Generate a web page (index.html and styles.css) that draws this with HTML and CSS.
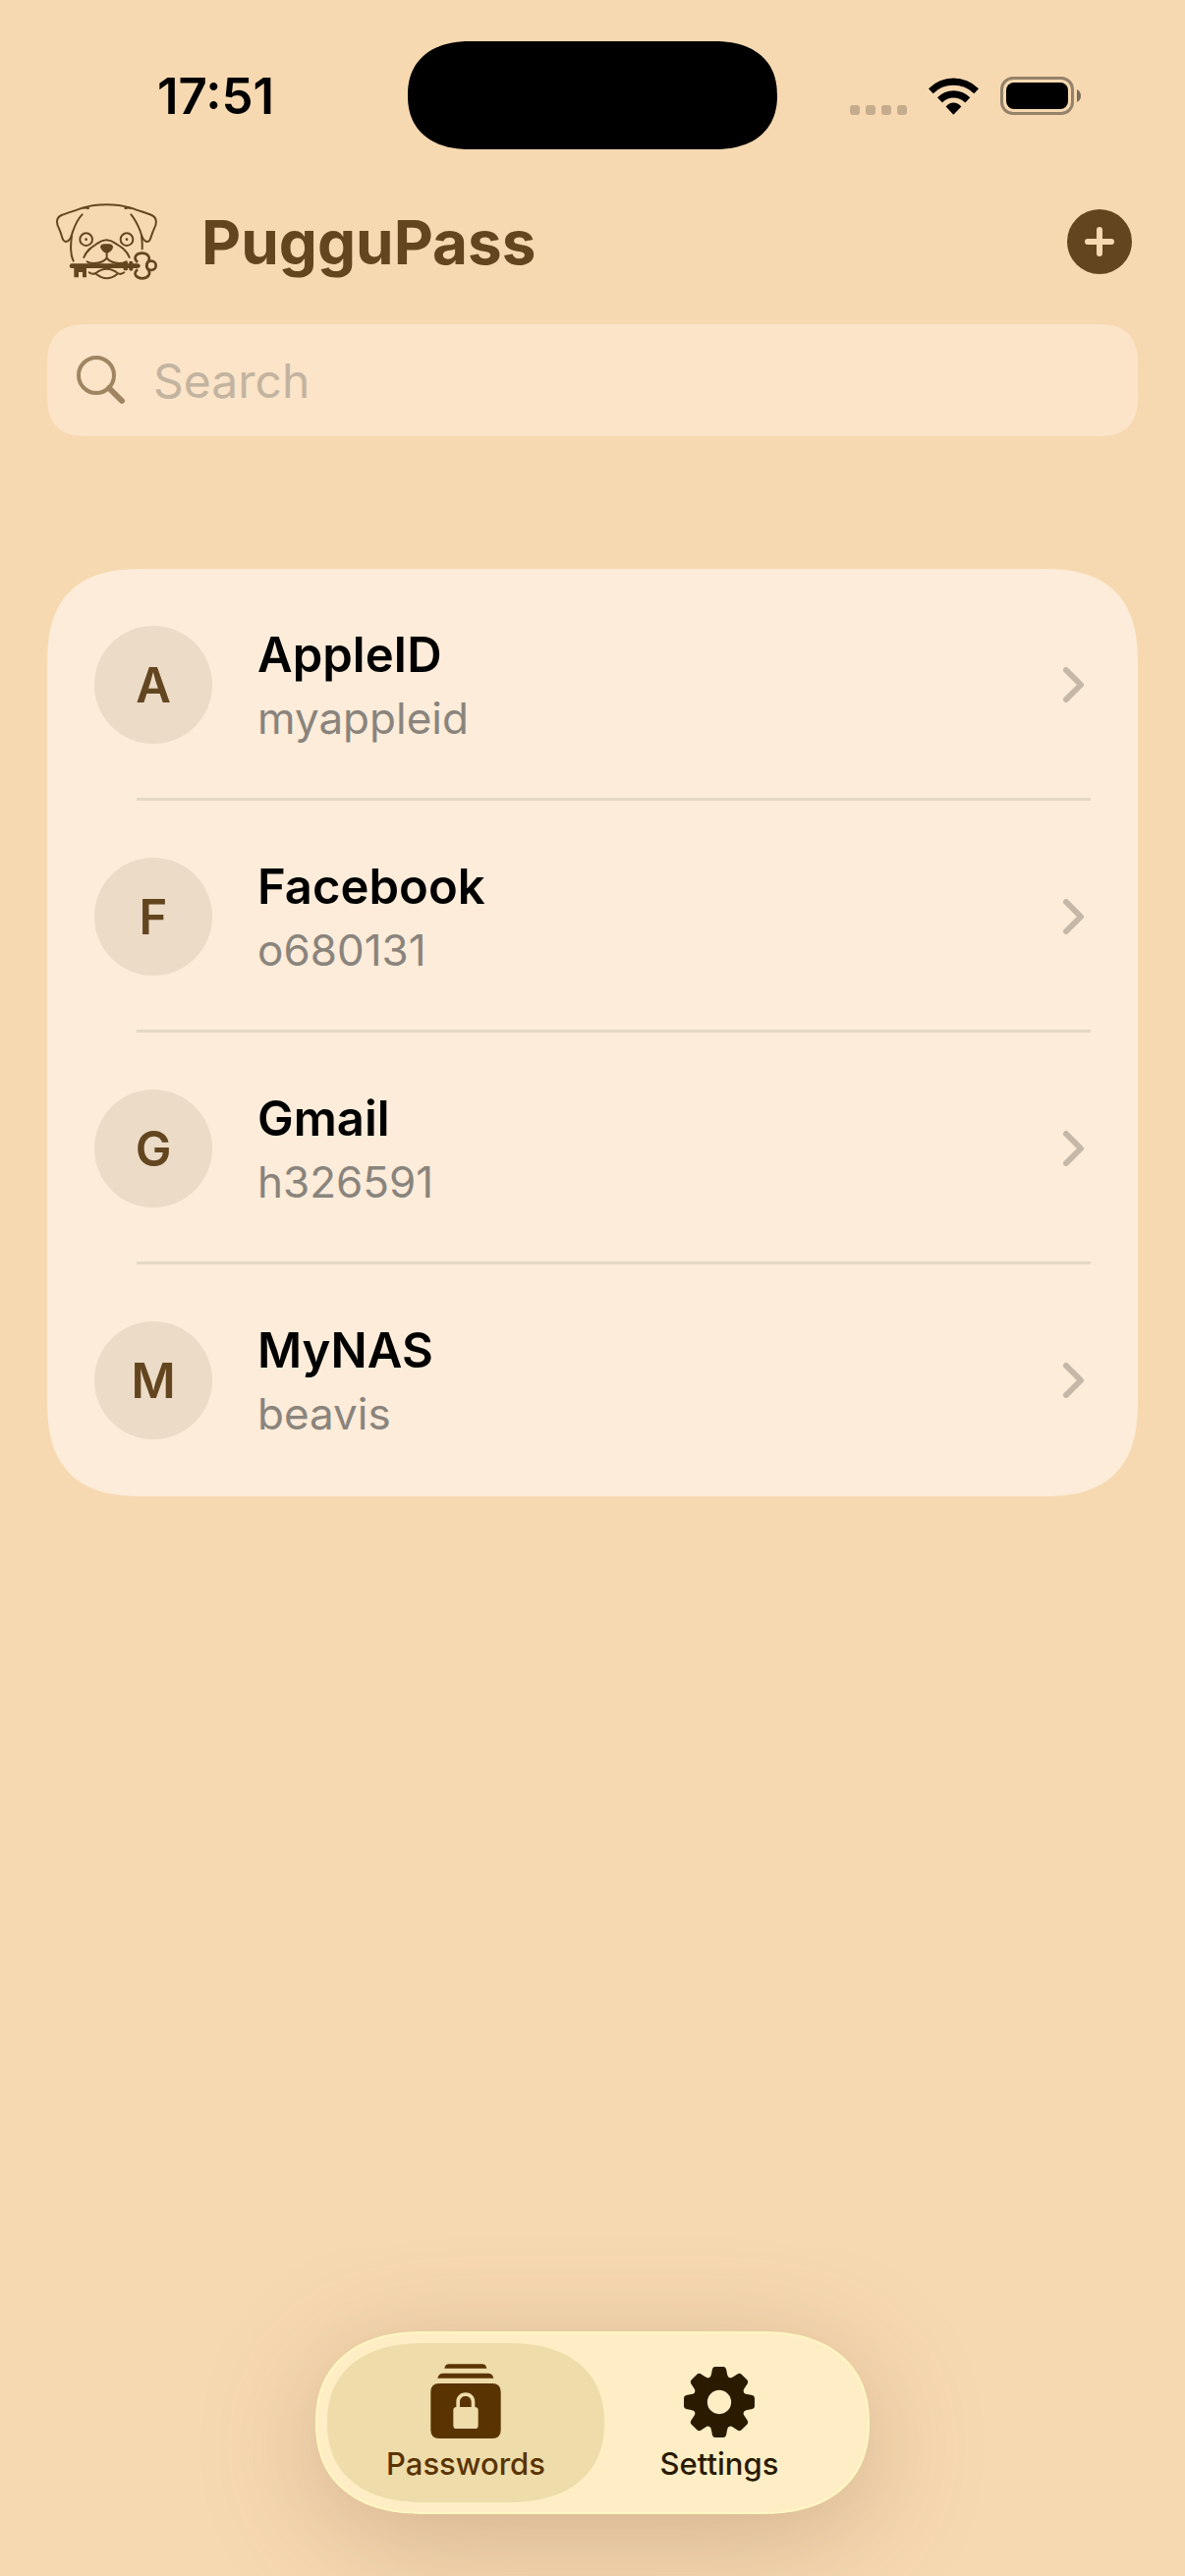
FILE: index.html
```html
<!DOCTYPE html>
<html lang="en">
<head>
<meta charset="utf-8">
<meta name="viewport" content="width=device-width, initial-scale=1">
<title>PugguPass</title>
<link rel="stylesheet" href="styles.css">
</head>
<body>
<div class="status-bar">
  <time class="clock">17:51</time>
  <div class="island"></div>
  <div class="indicators">
    <svg class="signal" viewBox="0 0 58 10" aria-hidden="true">
      <rect width="10" height="10" rx="3"/><rect x="16" width="10" height="10" rx="3"/><rect x="32" width="10" height="10" rx="3"/><rect x="48" width="10" height="10" rx="3"/>
    </svg>
    <svg class="wifi" viewBox="375 86 153 113" aria-hidden="true">
      <path d="M375 119Q407 87 451 87Q495 87 528 119L514 134Q487 109 451 109Q415 109 389 134Z"/>
      <path d="M402 146Q423 125 451 125Q480 125 502 146L487 162Q471 147 451 147Q431 147 417 162Z"/>
      <path d="M428 174Q438 162 451 162Q465 162 475 174L451 199Z"/>
    </svg>
    <svg class="battery" viewBox="0 0 82 39" aria-hidden="true">
      <rect x="1.5" y="1.5" width="72" height="36" rx="11.500" fill="none" stroke="#000" stroke-opacity=".4" stroke-width="3"/>
      <rect x="6" y="6" width="63" height="27" rx="8"/>
      <path d="M78 13Q82 15 82 19.500Q82 24 78 26Z" fill-opacity=".5"/>
    </svg>
  </div>
</div>

<header class="header">
  <svg class="logo" viewBox="48 26 315 288" aria-hidden="true">
    <g fill="none" stroke="#634620" stroke-width="6" stroke-linecap="round" stroke-linejoin="round">
      <path d="M132 67Q165 57 205 57Q245 57 279 67"/>
      <path d="M150 68Q138 64 125 69C104 77 85 82 68 89C49 97 52 117 61 132C67 144 68 156 73 165Q78 173 87 168C99 162 98 148 103 137C110 117 117 101 131 87"/>
      <path d="M262 68Q274 64 287 69C308 77 326 82 343 89C361 97 359 117 350 132C344 144 341 158 337 166Q332 173 324 168C313 162 312 148 308 137C300 117 293 102 280 87"/>
      <path d="M99 153C95 180 94 208 104 229M312 152Q315 172 314 192"/>
      <circle cx="143" cy="163" r="19"/><circle cx="267" cy="163" r="19"/>
      <path d="M136 218C146 193 163 185 178 175Q205 155 232 175C248 185 265 193 275 218"/>
      <path d="M206 202V219C196 234 166 242 146 231M206 219C216 234 246 242 266 231"/>
      <path d="M152 264Q162 272 173 266Q188 253 206 253Q223 253 239 266Q249 272 259 264M173 268Q206 295 239 268"/>
    </g>
    <g fill="#634620">
      <circle cx="143" cy="163" r="4"/><circle cx="267" cy="163" r="4"/>
      <path d="M186 185Q188 177 198 177H213Q223 177 225 185Q226 192 217 200Q206 211 195 200Q186 192 186 185Z"/>
      <path d="M98 237H257V232Q264 226 270 232V237H274V231Q280 227 286 232V237H299Q307 237 309 244Q307 251 299 251H286V256Q280 261 274 256V251H270V256Q264 260 257 256V251H144V279H132V263H120V279H106V251H98Q92 250 92 244Q93 238 98 237Z"/>
    </g>
    <path d="M300 233C284 217 298 205 314 205C331 205 343 219 330 234Q325 243 330 252C344 267 332 282 314 282C297 282 284 269 300 255" fill="none" stroke="#634620" stroke-width="8"/>
    <circle cx="342" cy="243" r="14" fill="none" stroke="#634620" stroke-width="8"/>
  </svg>
  <h1 class="title">PugguPass</h1>
  <button class="add" type="button" aria-label="Add password">
    <svg viewBox="0 0 66 66" aria-hidden="true"><path d="M33 21V45M21 33H45"/></svg>
  </button>
</header>

<main class="content">
  <label class="search">
    <svg class="search-icon" viewBox="0 0 50 50" aria-hidden="true"><circle cx="20" cy="20" r="18"/><path d="M33 33L46 46"/></svg>
    <input class="search-input" type="search" placeholder="Search" aria-label="Search">
  </label>

  <ul class="accounts">
    <li class="account">
      <a class="account-link" href="#appleid">
        <span class="avatar">A</span>
        <span class="account-text"><span class="account-name">AppleID</span><span class="account-user">myappleid</span></span>
        <svg class="chevron" viewBox="0 0 22 36" aria-hidden="true"><path d="M3 3L18 18L3 33"/></svg>
      </a>
    </li>
    <li class="account">
      <a class="account-link" href="#facebook">
        <span class="avatar">F</span>
        <span class="account-text"><span class="account-name">Facebook</span><span class="account-user">o680131</span></span>
        <svg class="chevron" viewBox="0 0 22 36" aria-hidden="true"><path d="M3 3L18 18L3 33"/></svg>
      </a>
    </li>
    <li class="account">
      <a class="account-link" href="#gmail">
        <span class="avatar">G</span>
        <span class="account-text"><span class="account-name">Gmail</span><span class="account-user">h326591</span></span>
        <svg class="chevron" viewBox="0 0 22 36" aria-hidden="true"><path d="M3 3L18 18L3 33"/></svg>
      </a>
    </li>
    <li class="account">
      <a class="account-link" href="#mynas">
        <span class="avatar">M</span>
        <span class="account-text"><span class="account-name">MyNAS</span><span class="account-user">beavis</span></span>
        <svg class="chevron" viewBox="0 0 22 36" aria-hidden="true"><path d="M3 3L18 18L3 33"/></svg>
      </a>
    </li>
  </ul>
</main>

<nav class="tab-bar">
  <a class="tab tab-active" href="#passwords" aria-current="page">
    <svg class="tab-icon" viewBox="410 165 222 234" aria-hidden="true">
      <path fill="currentColor" d="M456 182Q458 169 470 169H571Q583 169 585 182ZM435 212Q438 197 452 197H589Q603 197 606 212Z"/>
      <path fill="currentColor" fill-rule="evenodd" d="M440 228H602Q628 228 628 254V370Q628 396 602 396H440Q414 396 414 370V254Q414 228 440 228ZM492 300Q483 301 483 309V356Q483 366 493 366H549Q559 366 559 356V309Q559 301 549 300V284C549 246 492 246 492 284ZM503 300V284C503 261 538 261 538 284V300Z"/>
    </svg>
    <span class="tab-label">Passwords</span>
  </a>
  <a class="tab" href="#settings">
    <svg class="tab-icon" viewBox="-111 -120 222 234" aria-hidden="true">
      <defs><path id="tooth" d="M-37 -68L-34 -73Q-26 -74 -24 -86L-21 -101Q-19 -108 -12 -108H12Q19 -108 21 -101L24 -86Q26 -74 34 -73L37 -68Z"/></defs>
      <circle r="57" fill="none" stroke="currentColor" stroke-width="41"/>
      <g fill="currentColor">
        <use href="#tooth"/><use href="#tooth" transform="rotate(45)"/><use href="#tooth" transform="rotate(90)"/><use href="#tooth" transform="rotate(135)"/>
        <use href="#tooth" transform="rotate(180)"/><use href="#tooth" transform="rotate(225)"/><use href="#tooth" transform="rotate(270)"/><use href="#tooth" transform="rotate(315)"/>
      </g>
    </svg>
    <span class="tab-label">Settings</span>
  </a>
</nav>
</body>
</html>
```
FILE: styles.css
```css
* {
  box-sizing: border-box;
}

body {
  margin: 0;
  min-height: 100vh;
  display: flex;
  flex-direction: column;
  background: #f7d9b1;
  color: #000;
  font-family: Inter, "Liberation Sans", sans-serif;
}

a {
  color: inherit;
  text-decoration: none;
}

svg {
  display: block;
  flex: none;
}

/* Status bar */

.status-bar {
  display: grid;
  grid-template-columns: 1fr 376px 1fr;
  align-items: center;
  padding-top: 42px;
}

.clock {
  padding: 2px 0 0 160px;
  font-size: 51px;
  font-weight: 600;
  line-height: 60px;
}

.island {
  height: 110px;
  border-radius: 55px;
  background: #000;
}

.indicators {
  display: flex;
  align-items: flex-end;
  justify-content: flex-end;
  gap: 22px;
  padding-right: 106px;
}

.signal {
  width: 58px;
  height: 10px;
  opacity: .2;
}

.wifi {
  width: 51px;
  height: 38px;
}

.battery {
  width: 82px;
  height: 39px;
}

/* Header */

.header {
  display: flex;
  align-items: center;
  margin-top: 46px;
  padding: 0 54px 0 56px;
}

.logo {
  width: 105px;
  height: 96px;
}

.title {
  flex: 1;
  margin: 0 0 0 44px;
  padding-top: 2px;
  color: #634620;
  font-size: 62px;
  font-weight: 700;
  line-height: 80px;
}

.add {
  width: 66px;
  height: 66px;
  padding: 0;
  border: 0;
  border-radius: 50%;
  background: #634620;
}

.add path {
  stroke: #f7d9b1;
  stroke-width: 6;
  stroke-linecap: round;
}

/* Search */

.content {
  padding: 36px 48px;
}

.search {
  display: flex;
  align-items: center;
  gap: 28px;
  height: 114px;
  padding: 0 30px;
  border-radius: 32px;
  background: #fbe4c8;
}

.search-icon {
  width: 50px;
  height: 50px;
  fill: none;
  stroke: #a08562;
  stroke-width: 4;
}

.search-icon path {
  stroke-width: 6;
  stroke-linecap: round;
}

.search-input {
  flex: 1;
  min-width: 0;
  padding: 2px 0 0;
  border: 0;
  outline: 0;
  background: none;
  color: #000;
  font: 400 48px/60px Inter, "Liberation Sans", sans-serif;
}

.search-input::placeholder {
  color: #c3b4a0;
  opacity: 1;
}

/* Accounts */

.accounts {
  margin: 135px 0 0;
  padding: 0;
  list-style: none;
  border-radius: 80px;
  background: #fcecd9;
}

.account {
  padding: 0 48px;
}

.account-link {
  display: flex;
  align-items: center;
  height: 236px;
}

.account:not(:last-child) .account-link {
  height: 233px;
  padding-top: 3px;
}

.account:not(:last-child)::after {
  content: "";
  display: block;
  height: 3px;
  margin-left: 43px;
  background: #e5d8c5;
}

.avatar {
  width: 120px;
  height: 120px;
  padding-top: 2px;
  border-radius: 50%;
  background: #ebdbc7;
  color: #634620;
  font-size: 49px;
  font-weight: 600;
  line-height: 118px;
  text-align: center;
}

.account-text {
  flex: 1;
  display: flex;
  flex-direction: column;
  gap: 4px;
  margin-left: 46px;
  padding-top: 4px;
}

.account-name {
  font-size: 49px;
  font-weight: 600;
  line-height: 60px;
}

.account-user {
  color: #8a847d;
  font-size: 44px;
  line-height: 60px;
}

.chevron {
  width: 22px;
  height: 36px;
  margin-right: 6px;
  fill: none;
  stroke: #c5b8a9;
  stroke-width: 6;
  stroke-linecap: round;
  stroke-linejoin: round;
}

/* Tab bar */

.tab-bar {
  display: flex;
  align-self: center;
  margin: auto 0 63px;
  padding: 10px;
  border: 2px solid #fff7c2;
  border-radius: 93px;
  background: #ffeec5;
  box-shadow: 0 24px 120px rgba(100, 60, 40, .25);
}

.tab {
  display: flex;
  flex-direction: column;
  align-items: center;
  gap: 7px;
  width: 282px;
  height: 162px;
  padding-top: 20px;
  border-radius: 81px;
  color: #291a00;
}

.tab + .tab {
  margin-left: -24px;
}

.tab-active {
  background: #eedcaa;
  color: #593300;
}

.tab-icon {
  width: 74px;
  height: 78px;
}

.tab-label {
  font-size: 31px;
  font-weight: 500;
  line-height: 36px;
}

/* Continuous corners where the browser can draw them */

@supports (corner-shape: superellipse(1.4)) {
  .island {
    border-radius: 64px / 55px;
    corner-shape: superellipse(1.2);
  }

  .search {
    border-radius: 42px;
    corner-shape: superellipse(1.4);
  }

  .accounts {
    border-radius: 100px;
    corner-shape: superellipse(1.4);
  }

  .tab-bar {
    border-radius: 110px / 93px;
    corner-shape: superellipse(1.2);
  }

  .tab {
    border-radius: 98px / 81px;
    corner-shape: superellipse(1.2);
  }
}
```
